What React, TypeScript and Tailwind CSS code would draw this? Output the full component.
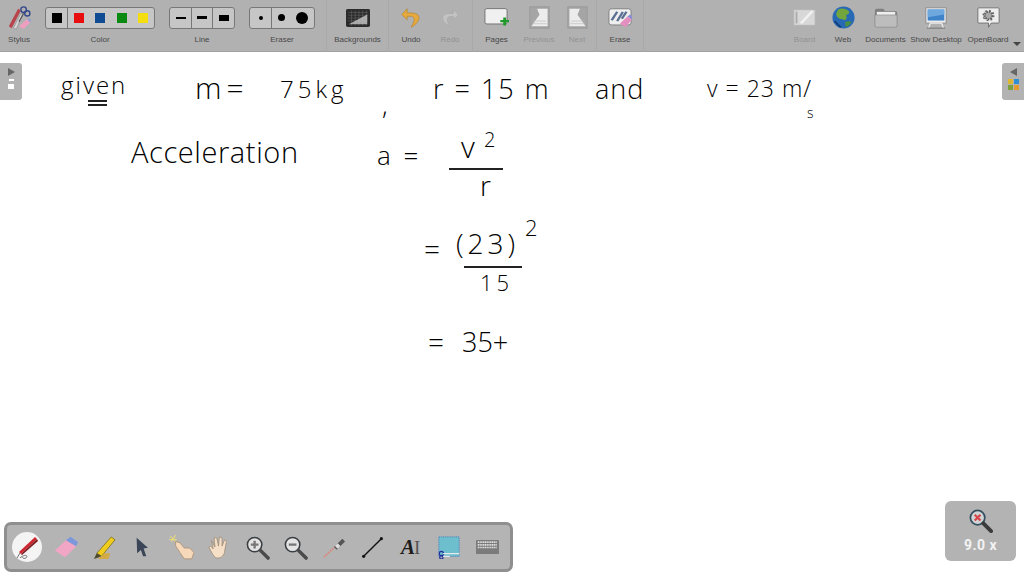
import React from "react";

function Label({ children, dim }: { children: React.ReactNode; dim?: boolean }) {
  return <span className={`text-[8px] leading-[10px] whitespace-nowrap ${dim ? "text-[#929292]" : "text-[#484848]"}`}>{children}</span>;
}

function ToolButton({ label, dim, w, children }: { label: string; dim?: boolean; w: string; children: React.ReactNode }) {
  return (
    <div className={`flex flex-col items-center shrink-0 ${w}`}>
      <div className="h-[35px] flex items-center justify-center">{children}</div>
      <Label dim={dim}>{label}</Label>
    </div>
  );
}

function Sep() {
  return <div className="w-px h-[52px] bg-[#a9a9a9] shrink-0" />;
}

function Segment({ w, children }: { w: string; children: React.ReactNode }) {
  return <div className={`h-[21px] flex items-center justify-center shrink-0 ${w}`}>{children}</div>;
}

function Group({ label, w, children }: { label: string; w: string; children: React.ReactNode }) {
  return (
    <div className={`flex flex-col items-center shrink-0 ${w}`}>
      <div className="h-[35px] w-full flex items-center">
        <div className="flex h-[22px] w-full items-center rounded-[3px] border border-[#777] bg-[#c6c6c6] divide-x divide-[#777]">{children}</div>
      </div>
      <Label>{label}</Label>
    </div>
  );
}

function Ic({ w = 26, h = 26, children }: { w?: number; h?: number; children: React.ReactNode }) {
  return <svg width={w} height={h} viewBox="0 0 26 26" preserveAspectRatio="none" fill="none">{children}</svg>;
}

const StylusIcon = () => (
  <Ic w={24} h={24}>
    <path d="M2 22 L12 3 L15 5 L5 24Z" fill="#b8434b" />
    <path d="M7 24 L15 8 L17 9 L10 25Z" fill="#d8d8d8" stroke="#777" strokeWidth=".5" />
    <circle cx="18" cy="4" r="3" stroke="#34468a" strokeWidth="1.5" />
    <circle cx="22" cy="8" r="2.8" stroke="#34468a" strokeWidth="1.5" />
    <path d="M18 8 L13 17" stroke="#555" strokeWidth="1.3" />
    <path d="M13 22 L22 14 L25 18 L18 25Z" fill="#ee9fc0" />
    <path d="M22 14 L25 18 L26 16 L24 13Z" fill="#8e9fd8" />
  </Ic>
);

const Backgrounds = () => (
  <Ic w={24} h={18}>
    <rect x="0" y="0" width="26" height="26" rx="2" fill="#2b2b2b" />
    <path d="M2 5H24M2 9H24M2 13H24M2 17H24M6 2V24M10 2V24M14 2V24M18 2V24M22 2V24" stroke="#6c6c6c" strokeWidth=".6" />
    <path d="M3 22 L23 8 V22Z" fill="#d2d2d2" opacity=".75" />
  </Ic>
);

const Undo = () => (
  <Ic w={20} h={22}>
    <path d="M13 7 H8 V2 L1 9 L8 15 V11 H13 C17 11 18 15 16 19 L13 24 C20 21 25 15 23 11 C22 8 17 7 13 7Z" fill="#e5a93d" stroke="#b37c1f" strokeWidth=".7" />
  </Ic>
);

const Redo = () => (
  <Ic w={18} h={20}>
    <path d="M13 7 H18 V2 L25 9 L18 15 V11 H13 C9 11 8 15 10 19 L13 24 C6 21 1 15 3 11 C4 8 9 7 13 7Z" fill="#c3c3c3" stroke="#a5a5a5" strokeWidth=".7" />
  </Ic>
);

const Pages = () => (
  <Ic w={25} h={21}>
    <rect x="1" y="2" width="23" height="19" rx="2" fill="#f0f0f0" stroke="#6b6b6b" strokeWidth="1" />
    <path d="M17 16 h3 v-3 h3 v3 h3 v3 h-3 v4 h-3 v-4 h-3Z" fill="#1f9a2a" />
  </Ic>
);

function Leaf({ flip }: { flip?: boolean }) {
  return (
    <Ic w={21} h={23}>
      <rect x="1" y="1" width="24" height="24" fill="#a5a5a5" stroke="#979797" />
      <path d={flip ? "M3 3 H16 L13 10 L17 15 L23 23 H3Z" : "M23 3 H10 L13 10 L9 15 L3 23 H23Z"} fill="#ececec" />
      <path d="M5 17H21M4 20H22" stroke="#bdbdbd" strokeWidth=".8" />
    </Ic>
  );
}

const EraseIcon = () => (
  <Ic w={24} h={20}>
    <rect x="1" y="1" width="24" height="21" rx="3" fill="#eee" stroke="#777" />
    <path d="M4 16 L10 5 M10 17 L16 5 M15 14 L20 5" stroke="#5a6f92" strokeWidth="2.6" />
    <path d="M13 20 L21 11 L26 15 L19 25Z" fill="#e58fc0" />
    <path d="M21 11 L26 15 L26 11 L24 8Z" fill="#8a8fd6" />
  </Ic>
);

const BoardIcon = () => (
  <Ic w={23} h={17}>
    <rect x="1" y="1" width="24" height="24" rx="1" fill="#d8d8d8" stroke="#b4b4b4" />
    <path d="M9 22 L22 3" stroke="#f2f2f2" strokeWidth="3" />
    <path d="M4 4V22" stroke="#aaa" strokeWidth="2" />
  </Ic>
);

const Globe = () => (
  <Ic w={23} h={23}>
    <circle cx="13" cy="13" r="12.5" fill="#2769b5" />
    <path d="M7 4 C11 2 16 3 19 6 C21 9 17 9 16 11 C18 15 14 17 12 15 C8 15 4 12 5 8Z" fill="#72a63d" />
    <path d="M15 18 C18 17 21 17 22 18 C20 22 17 24 15 23Z" fill="#4b8f42" />
    <path d="M3 17 C5 19 7 22 10 24" stroke="#123e7a" strokeWidth="2" />
  </Ic>
);

const Folder = () => (
  <Ic w={24} h={20}>
    <path d="M1 3 Q1 1 3 1 H10 L12 4 H23 Q25 4 25 6 V24 H1Z" fill="#7f7f7f" />
    <rect x="3" y="5" width="20" height="5" fill="#efefef" />
    <path d="M1 9 H25 V23 Q25 25 23 25 H3 Q1 25 1 23Z" fill="#bdbdbd" stroke="#777" strokeWidth=".6" />
  </Ic>
);

const Monitor = () => (
  <Ic w={24} h={22}>
    <rect x="2" y="1" width="22" height="18" fill="#ececec" stroke="#888" />
    <rect x="4" y="3" width="18" height="13" fill="#3f83c9" />
    <path d="M4 3 H22 V9 L4 12Z" fill="#6fa8df" />
    <path d="M5 25 L7 19 H19 L21 25" stroke="#f0f0f0" strokeWidth="1.4" />
    <path d="M3 25H23" stroke="#777" strokeWidth="1.2" />
  </Ic>
);

const Gear = () => (
  <Ic w={23} h={22}>
    <path d="M2 1 H24 Q25 1 25 2 V18 Q25 19 24 19 H16 L13 24 V19 H2 Q1 19 1 18 V2 Q1 1 2 1Z" fill="#eee" stroke="#6a6a6a" />
    <circle cx="13" cy="10" r="4.5" stroke="#666" strokeWidth="2.5" strokeDasharray="2 1" fill="#aaa" />
    <circle cx="13" cy="10" r="6" stroke="#666" strokeWidth="1.6" strokeDasharray="2 2.7" />
  </Ic>
);

function Lens({ mark }: { mark: "plus" | "minus" }) {
  return (
    <Ic w={25} h={25}>
      <circle cx="10" cy="10" r="7.5" fill="#e4e4e4" stroke="#3a3f43" strokeWidth="1.6" />
      <path d="M16 16 L24 24" stroke="#4a4a4a" strokeWidth="3.6" strokeLinecap="round" />
      <path d={mark === "plus" ? "M6 10H14M10 6V14" : "M6 10H14"} stroke="#777" strokeWidth="2.4" />
    </Ic>
  );
}

const palette = [
  <div key="pen" className="w-[30px] h-[30px] rounded-full bg-[#f4f4f4] flex items-center justify-center">
    <Ic w={26} h={26}>
      <path d="M5 18 L21 3 L23 5 L7 20Z" fill="#cf2730" />
      <path d="M7 20 L23 5 L24 7 L8 21Z" fill="#7a1e22" />
      <path d="M3 24 L6 19 M6 24 C10 20 15 21 12 24 C10 25 8 24 9 23" stroke="#777" />
    </Ic>
  </div>,
  <Ic key="eraser" w={24} h={22}>
    <path d="M1 17 L13 5 L24 12 L12 25Z" fill="#f2a6c6" />
    <path d="M13 5 L18 1 L26 7 L24 12Z" fill="#7c97dc" />
  </Ic>,
  <Ic key="marker" w={25} h={25}>
    <path d="M6 19 L21 2 L25 5 L11 22Z" fill="#f0cc1d" stroke="#786b1d" strokeWidth=".8" />
    <path d="M6 19 L11 22 L3 25Z" fill="#4e4a2c" />
    <path d="M7 25 L14 19 H20 L18 25Z" fill="#d2ab45" />
  </Ic>,
  <Ic key="arrow" w={14} h={20}>
    <path d="M3 1 L24 14 L16 15 L21 25 L15 25 L11 17 L4 21Z" fill="#3a4657" />
  </Ic>,
  <Ic key="laser" w={28} h={28}>
    <path d="M3 3 L8 8M8 2 L4 8M2 6 H9" stroke="#e6d77c" strokeWidth="1" />
    <path d="M8 8 L12 9 L16 14 L21 14 L25 18 L23 24 L16 24 L12 18 L8 12Z" fill="#f6d9bb" stroke="#a98c6e" strokeWidth=".7" />
  </Ic>,
  <Ic key="hand" w={23} h={24}>
    <path d="M5 6 L9 13 L8 3 L11 3 L13 12 L14 2 L17 3 L17 12 L20 5 L22 7 L20 17 C20 22 16 25 12 25 C8 25 6 20 2 13 L4 12 L7 15Z" fill="#f5dfc7" stroke="#9a8770" strokeWidth=".8" />
  </Ic>,
  <Lens key="in" mark="plus" />,
  <Lens key="out" mark="minus" />,
  <Ic key="pointer" w={24} h={24}>
    <path d="M2 24 L14 13" stroke="#d98a80" strokeWidth="2" strokeDasharray="2 1" />
    <path d="M13 13 L22 4 L25 7 L16 16Z" fill="#555" />
    <path d="M14 12 L17 9 L20 12 L17 15Z" fill="#ddd" />
  </Ic>,
  <Ic key="line" w={23} h={23}>
    <path d="M3 23 L23 3" stroke="#111" strokeWidth="1.6" />
    <circle cx="3" cy="23" r="1.8" fill="#111" />
    <circle cx="23" cy="3" r="1.8" fill="#111" />
  </Ic>,
  <div key="text" className="flex items-center font-['Liberation_Serif',serif] italic font-bold text-[21px] leading-none text-[#1c1c1c]">
    A<span className="not-italic font-normal text-[#555] text-[19px] -ml-px">I</span>
  </div>,
  <Ic key="capture" w={22} h={23}>
    <rect x="1" y="1" width="24" height="22" fill="#6dbfce" stroke="#4a7fc0" strokeDasharray="1.5 1" />
    <circle cx="4" cy="20" r="2.5" stroke="#24309a" strokeWidth="1.4" />
    <circle cx="4" cy="24" r="2" stroke="#24309a" strokeWidth="1.4" />
    <path d="M6 20 H25M6 23 H14" stroke="#e8e8e8" strokeWidth="1.4" />
  </Ic>,
  <Ic key="keyboard" w={23} h={14}>
    <rect x="0" y="0" width="26" height="26" rx="1" fill="#7b7b7b" />
    <path d="M2 4H24M2 9H24M2 14H24" stroke="#e2e2e2" strokeWidth="3" strokeDasharray="1.4 .6" />
  </Ic>,
];

// Handwriting, real text laid on the board at the spot where it was written
type Ink = { t: string; x: number; y: number; s: number; track?: number };
const ink: Ink[] = [
  { t: "given", x: 61, y: 73, s: 24, track: 2 },
  { t: "m=", x: 195, y: 73, s: 30, track: 5 },
  { t: "75kg", x: 280, y: 77, s: 24, track: 4 },
  { t: ",", x: 382, y: 92, s: 26 },
  { t: "r = 15 m", x: 433, y: 75, s: 27, track: 2 },
  { t: "and", x: 595, y: 75, s: 27, track: 1 },
  { t: "v = 23 m/", x: 707, y: 77, s: 23, track: 1 },
  { t: "s", x: 807, y: 106, s: 14 },
  { t: "Acceleration", x: 131, y: 137, s: 29, track: 0.6 },
  { t: "a =", x: 377, y: 142, s: 26, track: 3 },
  { t: "v", x: 461, y: 132, s: 30 },
  { t: "2", x: 484, y: 130, s: 20 },
  { t: "r", x: 480, y: 171, s: 28 },
  { t: "=", x: 424, y: 235, s: 28 },
  { t: "(23)", x: 456, y: 229, s: 28, track: 4 },
  { t: "2", x: 525, y: 216, s: 22 },
  { t: "15", x: 480, y: 271, s: 22, track: 4 },
  { t: "=", x: 428, y: 328, s: 28 },
  { t: "35+", x: 462, y: 328, s: 27, track: 0 },
];

// Rules drawn by hand: fraction bars and the double underline
const rules = [
  { x: 88, y: 100, w: 19 },
  { x: 88, y: 104, w: 19 },
  { x: 449, y: 168, w: 54 },
  { x: 464, y: 266, w: 58 },
];

export default function App() {
  return (
    <div className="relative w-[1024px] h-[576px] overflow-hidden bg-white font-['Liberation_Sans',Arial,sans-serif]">
      <div className="flex items-start h-[52px] bg-[#b1b1b1] border-b border-[#a2a2a2]">
        <ToolButton label="Stylus" w="w-[38px]"><StylusIcon /></ToolButton>
        <div className="w-[7px] shrink-0" />
        <Group label="Color" w="w-[110px]">
          <Segment w="w-[22px]"><div className="w-[10px] h-[10px] bg-black" /></Segment>
          <div className="flex flex-1 justify-around items-center h-[21px]">
            <div className="w-[10px] h-[10px] bg-[#e80e10]" />
            <div className="w-[10px] h-[10px] bg-[#0f4c94]" />
            <div className="w-[10px] h-[10px] bg-[#0b8a12]" />
            <div className="w-[10px] h-[10px] bg-[#f4de10]" />
          </div>
        </Group>
        <div className="w-[14px] shrink-0" />
        <Group label="Line" w="w-[66px]">
          <Segment w="w-[22px]"><div className="w-[10px] h-[2px] bg-black" /></Segment>
          <Segment w="w-[21px]"><div className="w-[10px] h-[3px] bg-black" /></Segment>
          <Segment w="w-[21px]"><div className="w-[10px] h-[6px] bg-black" /></Segment>
        </Group>
        <div className="w-[14px] shrink-0" />
        <Group label="Eraser" w="w-[66px]">
          <Segment w="w-[22px]"><div className="w-[4px] h-[4px] rounded-full bg-black" /></Segment>
          <div className="flex flex-1 justify-around items-center h-[21px]">
            <div className="w-[7px] h-[7px] rounded-full bg-black" />
            <div className="w-[12px] h-[12px] rounded-full bg-black" />
          </div>
        </Group>
        <div className="w-[11px] shrink-0" />
        <Sep />
        <ToolButton label="Backgrounds" w="w-[61px]"><Backgrounds /></ToolButton>
        <Sep />
        <ToolButton label="Undo" w="w-[44px]"><Undo /></ToolButton>
        <ToolButton label="Redo" dim w="w-[34px]"><Redo /></ToolButton>
        <div className="w-[5px] shrink-0" />
        <Sep />
        <ToolButton label="Pages" w="w-[47px]"><Pages /></ToolButton>
        <ToolButton label="Previous" dim w="w-[38px]"><Leaf /></ToolButton>
        <ToolButton label="Next" dim w="w-[38px]"><Leaf flip /></ToolButton>
        <Sep />
        <ToolButton label="Erase" w="w-[46px]"><EraseIcon /></ToolButton>
        <Sep />
        <div className="flex-1" />
        <ToolButton label="Board" dim w="w-[39px]"><BoardIcon /></ToolButton>
        <ToolButton label="Web" w="w-[38px]"><Globe /></ToolButton>
        <ToolButton label="Documents" w="w-[47px]"><Folder /></ToolButton>
        <ToolButton label="Show Desktop" w="w-[54px]"><Monitor /></ToolButton>
        <ToolButton label="OpenBoard" w="w-[50px]"><Gear /></ToolButton>
        <div className="w-[11px] h-[51px] shrink-0 flex items-end pb-[5px]">
          <div className="w-0 h-0 border-x-[4px] border-x-transparent border-t-[4px] border-t-[#444]" />
        </div>
      </div>

      {/* left drawer tab */}
      <div className="absolute left-0 top-[63px] w-[22px] h-[37px] rounded-r-[3px] bg-[#b3b3b3] flex flex-col items-center pt-[5px] gap-[3px]">
        <div className="w-0 h-0 border-y-[4px] border-y-transparent border-l-[7px] border-l-[#666]" />
        <div className="w-[5px] h-[2px] bg-white" />
        <div className="w-[6px] h-[5px] bg-white" />
      </div>

      {/* right drawer tab */}
      <div className="absolute right-0 top-[63px] w-[22px] h-[37px] rounded-l-[3px] bg-[#b3b3b3] flex flex-col items-center pt-[5px] gap-[3px]">
        <div className="w-0 h-0 border-y-[4px] border-y-transparent border-r-[7px] border-r-[#666]" />
        <div className="grid grid-cols-2 gap-[1px]">
          <div className="w-[5px] h-[5px] bg-[#e0b52f]" />
          <div className="w-[5px] h-[5px] bg-[#2f8fd0]" />
          <div className="w-[5px] h-[5px] bg-[#7fa03a]" />
          <div className="w-[5px] h-[5px] bg-[#e59a2f]" />
        </div>
      </div>

      {/* board */}
      {ink.map((i) => (
        <span
          key={i.t + i.x}
          className="absolute whitespace-pre leading-none font-['Open_Sans',sans-serif] font-light text-black"
          style={{ left: i.x, top: i.y, fontSize: i.s, letterSpacing: i.track ?? 0 }}
        >
          {i.t}
        </span>
      ))}
      {rules.map((r) => (
        <div key={r.y} className="absolute h-[1.5px] bg-[#222]" style={{ left: r.x, top: r.y, width: r.w }} />
      ))}

      {/* bottom tool palette */}
      <div className="absolute left-[4px] top-[522px] w-[509px] h-[50px] rounded-[7px] bg-[#b4b4b4] border-[3px] border-[#8f8f8f] flex items-center pl-[1px]">
        {palette.map((icon, n) => (
          <div key={n} className="w-[38.35px] h-full flex items-center justify-center shrink-0">{icon}</div>
        ))}
      </div>

      {/* zoom indicator */}
      <div className="absolute left-[945px] top-[501px] w-[71px] h-[60px] rounded-[6px] bg-[#b3b3b3] flex flex-col items-center pt-[7px]">
        <Ic w={25} h={25}>
          <circle cx="10" cy="10" r="7.5" fill="#cfd4d6" stroke="#34505e" strokeWidth="1.8" />
          <path d="M16 16 L24 24" stroke="#3b3b3b" strokeWidth="4" strokeLinecap="round" />
          <path d="M7 7 L13 13 M13 7 L7 13" stroke="#d9454a" strokeWidth="2.4" />
        </Ic>
        <span className="mt-[5px] text-[14px] leading-none font-bold tracking-[0.5px] text-[#f2f2f2] font-['Roboto',sans-serif]">9.0 x</span>
      </div>
    </div>
  );
}
